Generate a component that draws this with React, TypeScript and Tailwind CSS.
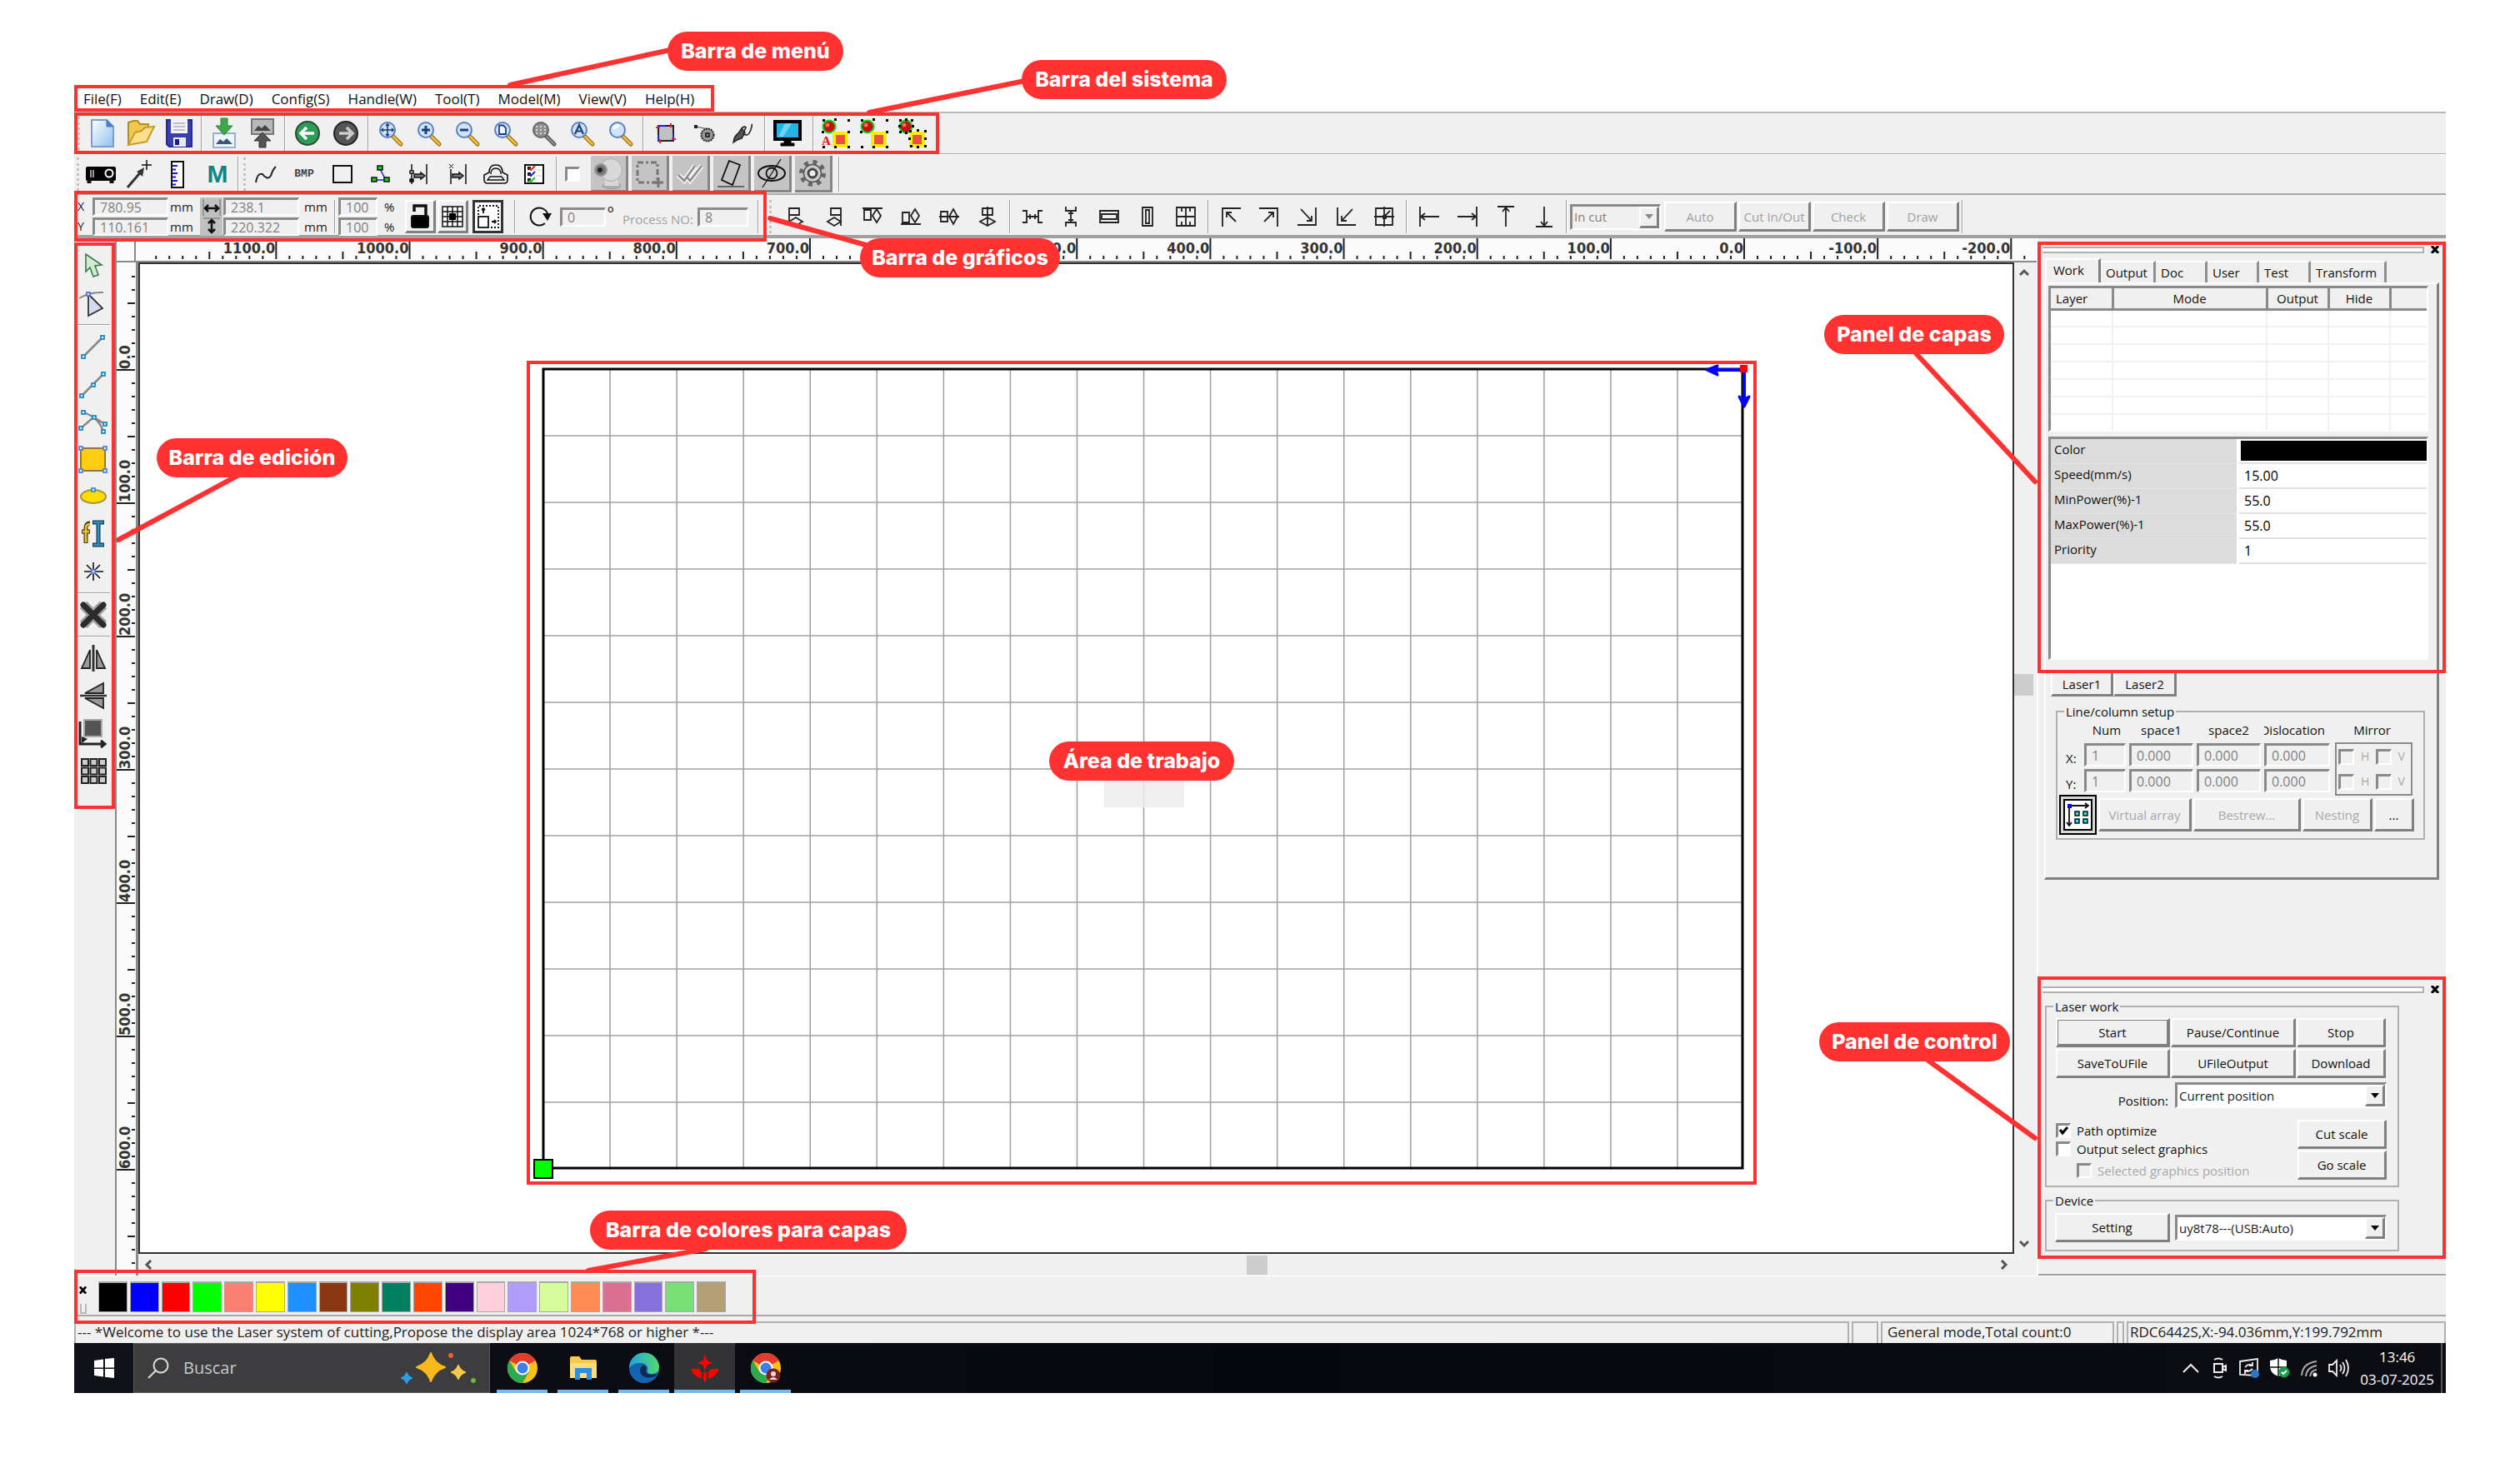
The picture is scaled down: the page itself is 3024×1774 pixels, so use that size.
import React from "react";

const UI = "font-['Open_Sans','Noto_Sans',sans-serif]";
const raised = "border-t-2 border-l-2 border-b-3 border-r-3 border-t-white border-l-white border-b-[#808080] border-r-[#808080] bg-[#f0f0f0]";
const sunken = "border-t-3 border-l-3 border-b-2 border-r-2 border-t-[#8a8a8a] border-l-[#8a8a8a] border-b-white border-r-white";

type Kids = { children?: React.ReactNode };

function Frame({ className }: { className: string }) {
  return <span aria-hidden className={`pointer-events-none absolute z-10 border-4 border-[#ff3131] ${className}`} />;
}

function Svg({ w = 32, h = 32, vb, children }: Kids & { w?: number; h?: number; vb?: string }) {
  return (
    <svg width={w} height={h} viewBox={vb ?? `0 0 ${w} ${h}`} fill="none" stroke="#111" strokeWidth="2" className="block shrink-0 overflow-visible">
      {children}
    </svg>
  );
}

function Tool({ label, children }: Kids & { label: string }) {
  return (
    <button aria-label={label} className="flex h-full w-[46px] shrink-0 items-center justify-center">
      {children}
    </button>
  );
}

function Sep() {
  return (
    <span className="flex h-full w-2 shrink-0 justify-center py-0.5">
      <span className="w-0.5 border-r border-l border-r-white border-l-[#a0a0a0]" />
    </span>
  );
}

function Grip() {
  return <span className="h-10 w-[3px] shrink-0 self-center border-l-3 border-dotted border-[#c4c4c4]" />;
}

/* ---------- system bar icons ---------- */

function Lens({ gray, children }: Kids & { gray?: boolean }) {
  return (
    <Svg w={30} h={30}>
      <path d="M17 18 L27 28" stroke={gray ? "#555" : "#9a6a10"} strokeWidth="5" strokeLinecap="round" />
      <path d="M18 19 L27 28" stroke={gray ? "#888" : "#f0c040"} strokeWidth="2.5" strokeLinecap="round" />
      <circle cx="11" cy="11" r="9" fill={gray ? "#909090" : "#cfe4fb"} stroke={gray ? "#666" : "#5b7fc0"} strokeWidth="2" />
      {!children && <path d="M5 10 A6.5 6.5 0 0 1 14 5 Q12 10 5 10Z" fill="#fff" stroke="none" />}
      {children}
    </Svg>
  );
}

function Balls({ kind }: { kind: number }) {
  const d = kind === 2 ? [[1, 1], [8, 0], [15, 1], [0, 8], [16, 8], [1, 15], [8, 16], [13, 14], [22, 13], [31, 14], [12, 23], [31, 23], [14, 32], [22, 33], [31, 32]] : [[1, 1], [15, 0], [31, 1], [0, 15], [31, 15], [1, 33], [15, 33], [31, 33]];
  return (
    <Svg w={34} h={34}>
      <circle cx="9" cy="9" r="7.5" fill="#c01010" stroke="#20d020" strokeWidth="2" />
      <circle cx="7" cy="7" r="2.5" fill="#f07050" stroke="none" />
      <rect x="15" y="17" width="15" height="15" fill="#f05040" stroke="#ffee00" strokeWidth="4" />
      {d.map(([x, y], i) => (
        <rect key={i} x={x} y={y - 1} width="3" height="3" fill="#000" stroke="none" />
      ))}
      {kind === 0 && (
        <text x="0" y="31" fontSize="15" fontWeight="700" fill="#f01010" stroke="none" className="font-['Liberation_Serif',serif]">
          A
        </text>
      )}
    </Svg>
  );
}

function SystemBar() {
  return (
    <div className="relative flex h-[51px] items-center border-t-2 border-b border-t-[#b8b8b8] border-b-[#a8a8a8] bg-[#f0f0f0] pl-1">
      <Frame className="inset-y-[-1px] left-0 w-[1038px]" />
      <Grip />
      <span className="w-1" />
      <Tool label="New">
        <Svg w={30} h={34}>
          <defs>
            <linearGradient id="pg" x1="0" y1="0" x2="1" y2="1">
              <stop offset="0" stopColor="#fff" />
              <stop offset="1" stopColor="#8fc0ee" />
            </linearGradient>
          </defs>
          <path d="M2 1 H20 L28 9 V33 H2Z" fill="url(#pg)" stroke="#7c9ccc" />
          <path d="M20 1 V9 H28Z" fill="#4a80c8" stroke="#4a78b8" strokeWidth="1" />
        </Svg>
      </Tool>
      <Tool label="Open">
        <Svg w={34} h={34}>
          <path d="M2 31 V4 L8 2 L13 2 L16 6 L26 6 V14" fill="#f2c84c" stroke="#b98a1c" />
          <path d="M2 31 L10 16 L18 14 L22 10 L33 9 L24 27Z" fill="#fde08a" stroke="#c89a2c" />
        </Svg>
      </Tool>
      <Tool label="Save">
        <Svg w={32} h={34}>
          <path d="M1 1 H31 V33 H4 L1 30Z" fill="#3a3fb0" stroke="#26289a" />
          <rect x="6" y="0" width="20" height="17" fill="#f4f4f8" stroke="none" />
          <path d="M9 5 H23 M9 9 H23 M9 13 H23" stroke="#c0c0cc" />
          <rect x="9" y="22" width="15" height="11" fill="#e8e8f4" stroke="none" />
          <rect x="11" y="24" width="5" height="7" fill="#1c1f78" stroke="none" />
        </Svg>
      </Tool>
      <Sep />
      <Tool label="Import">
        <Svg w={28} h={36}>
          <rect x="1" y="18" width="26" height="17" fill="#eef5fc" stroke="#9ab0c8" />
          <path d="M4 31 L9 25 L13 28 L17 24 L24 31Z" fill="#3a5878" stroke="none" />
          <path d="M10 0 H18 V9 H24 L14 20 L4 9 H10Z" fill="#3fa84a" stroke="#2b8436" strokeWidth="1" />
        </Svg>
      </Tool>
      <Tool label="Export">
        <Svg w={28} h={36}>
          <rect x="1" y="1" width="26" height="18" fill="#b8b8b8" stroke="#777" />
          <path d="M4 15 L9 9 L13 12 L17 8 L24 15Z" fill="#444" stroke="none" />
          <path d="M10 35 H18 V27 H24 L14 17 L4 27 H10Z" fill="#555" stroke="#333" strokeWidth="1" />
        </Svg>
      </Tool>
      <Sep />
      <Tool label="Undo">
        <Svg>
          <circle cx="16" cy="16" r="14" fill="#2f9c55" stroke="#2c4636" />
          <path d="M24 16 H9 M15 9 L8 16 L15 23" stroke="#fff" strokeWidth="3.5" />
        </Svg>
      </Tool>
      <Tool label="Redo">
        <Svg>
          <circle cx="16" cy="16" r="14" fill="#555" stroke="#222" />
          <path d="M8 16 H23 M17 9 L24 16 L17 23" stroke="#ccc" strokeWidth="3.5" />
        </Svg>
      </Tool>
      <Sep />
      <Tool label="Pan">
        <Lens><path d="M11 4 V18 M4 11 H18 M9 6 L11 4 L13 6 M9 16 L11 18 L13 16 M6 9 L4 11 L6 13 M16 9 L18 11 L16 13" stroke="#1d3f80" strokeWidth="1.6" /></Lens>
      </Tool>
      <Tool label="Zoom in">
        <Lens><path d="M11 6 V16 M6 11 H16" stroke="#1d3f80" strokeWidth="3" /></Lens>
      </Tool>
      <Tool label="Zoom out">
        <Lens><path d="M6 11 H16" stroke="#1d3f80" strokeWidth="3" /></Lens>
      </Tool>
      <Tool label="Zoom to page">
        <Lens><path d="M7 5.5 H12 L15 8.5 V16 H7Z" fill="#eef6ff" stroke="#1d3f80" strokeWidth="1.8" /></Lens>
      </Tool>
      <Tool label="Zoom to data">
        <Lens gray><path d="M5 7 H17 M5 11 H17 M5 15 H17" stroke="#eee" strokeWidth="1.6" strokeDasharray="2 3" /></Lens>
      </Tool>
      <Tool label="Zoom all">
        <Lens><path d="M6 16 L11 5 L16 16 M8 12.5 H14" stroke="#1d3f80" strokeWidth="2.2" /></Lens>
      </Tool>
      <Tool label="Zoom view">
        <Lens />
      </Tool>
      <Sep />
      <Tool label="Track frame">
        <Svg w={24} h={24}>
          <rect x="3" y="3" width="18" height="18" fill="#c0c0c0" stroke="#222" />
          <path d="M3 3 H12 M21 12 V21 M3 14 V21" stroke="#2020f0" />
          <path d="M0 5 H5 M18 0 V5 M19 19 H24 M5 19 V24" stroke="#f02020" />
        </Svg>
      </Tool>
      <Tool label="Node track">
        <Svg w={26} h={24}>
          <path d="M3 4 L18 7" strokeWidth="1.2" stroke="#555" />
          <rect x="1" y="2" width="4" height="4" fill="#222" stroke="none" />
          <circle cx="17" cy="14" r="7.5" fill="#999" stroke="#222" strokeDasharray="2 1" />
          <rect x="15" y="12" width="4" height="4" strokeWidth="1.5" />
        </Svg>
      </Tool>
      <Tool label="Pen track">
        <Svg w={26} h={24}>
          <path d="M2 23 Q3 15 8 12 L12 6 L16 11 L12 18 Q7 19 2 23Z" fill="#555" stroke="#222" strokeWidth="1.5" />
          <path d="M12 6 Q16 3 17 5 L14 12 Q19 17 22 10 T24 1" stroke="#333" strokeWidth="1.8" />
        </Svg>
      </Tool>
      <Sep />
      <Tool label="Preview">
        <Svg w={34} h={32}>
          <rect x="2" y="2" width="30" height="21" fill="#22b4e4" stroke="#000" strokeWidth="4" />
          <path d="M6 20 L14 4 H22 L12 20Z" fill="#6ad4f4" stroke="none" />
          <path d="M13 24 H21 V28 H25 V31 H9 V28 H13Z" fill="#000" stroke="#000" strokeWidth="1" />
        </Svg>
      </Tool>
      <span className="w-1" />
      <Sep />
      <Tool label="Sort all"><Balls kind={0} /></Tool>
      <Tool label="Sort"><Balls kind={1} /></Tool>
      <Tool label="Sort nodes"><Balls kind={2} /></Tool>
    </div>
  );
}

/* ---------- tool bar ---------- */

function Pad({ label, children }: Kids & { label: string }) {
  return (
    <button aria-label={label} className="flex h-[44px] w-[45px] items-center justify-center border-r-3 border-b-3 border-[#858585] bg-[#c4c4c4]">
      {children}
    </button>
  );
}

function ToolBar() {
  return (
    <div className="relative flex h-[49px] items-center border-t border-b-2 border-t-white border-b-[#a8a8a8] bg-[#f0f0f0] pl-[3px]">
      <Grip />
      <span className="w-[3px]" />
      <Tool label="Laser device">
        <Svg w={36} h={24}>
          <rect x="0" y="3" width="36" height="17" rx="2" fill="#000" stroke="none" />
          <path d="M4 18 V23 M31 18 V23" strokeWidth="5" />
          <path d="M6 7 V16 M9 7 V16" stroke="#999" />
          <circle cx="28" cy="11" r="4.5" stroke="#fff" fill="#000" />
        </Svg>
      </Tool>
      <Tool label="Set position">
        <Svg w={32} h={34}>
          <path d="M2 33 L20 12" stroke="#333" strokeWidth="3" />
          <path d="M22 9 L13 14 L20 20Z" fill="#333" stroke="none" />
          <path d="M25 0 V12 M19 6 H31" strokeWidth="1.5" />
        </Svg>
      </Tool>
      <Tool label="Measure">
        <Svg w={16} h={33}>
          <rect x="1" y="1" width="14" height="31" fill="#fff" />
          <path d="M2 6 H8 M2 10.5 H6 M2 15 H8 M2 19.5 H6 M2 24 H8 M2 28.5 H6" stroke="#1818e8" />
        </Svg>
      </Tool>
      <Tool label="Material">
        <span className="pl-1 font-['Liberation_Sans',sans-serif] text-[30px] leading-8 font-bold text-[#0e8484]">M</span>
      </Tool>
      <Sep />
      <span className="w-0.5" />
      <Grip />
      <span className="w-px" />
      <Tool label="Smooth curve">
        <Svg w={26} h={22}><path d="M1 21 Q3 9 9 11 Q15 19 19 13 Q21 6 25 2" stroke="#222" /></Svg>
      </Tool>
      <Tool label="Bitmap">
        <span className="font-['Liberation_Mono',monospace] text-[13px] font-bold text-[#444]">BMP</span>
      </Tool>
      <Tool label="Close curve">
        <Svg w={24} h={22}><rect x="1" y="1" width="22" height="20" /></Svg>
      </Tool>
      <Tool label="Data check">
        <Svg w={24} h={22}>
          <path d="M11 5 L18 18 H4" stroke="#2020f0" strokeWidth="1.5" />
          <rect x="8" y="1" width="6" height="5" fill="#0d0" strokeWidth="1.5" />
          <rect x="1" y="15" width="6" height="5" fill="#0d0" strokeWidth="1.5" />
          <rect x="16" y="15" width="6" height="5" fill="#0d0" strokeWidth="1.5" />
        </Svg>
      </Tool>
      <Tool label="Offset">
        <Svg w={24} h={24}>
          <path d="M3 0 V24 M21 0 V24" strokeWidth="1.5" />
          <rect x="1" y="8" width="4" height="3" fill="#fff" strokeWidth="1.500" />
          <rect x="1" y="18" width="4" height="3" fill="#111" strokeWidth="1.500" />
          <path d="M6 12 H14 V10 L19 14 L14 18 V16 H6Z" fill="#777" strokeWidth="1.5" />
        </Svg>
      </Tool>
      <Tool label="Gap">
        <Svg w={22} h={24}>
          <path d="M3 6 V24 M21 0 V24" strokeWidth="1.5" />
          <path d="M1 0 L6 5 M6 0 L1 5" strokeWidth="1" />
          <path d="M5 12 H13 V10 L18 14 L13 18 V16 H5Z" fill="#777" strokeWidth="1.5" />
        </Svg>
      </Tool>
      <Tool label="Group">
        <Svg w={32} h={24}>
          <path d="M8 10 Q8 1 16 1 T24 10 L30 13 V19 Q30 23 26 23 H6 Q2 23 2 19 V13Z" strokeWidth="1.6" />
          <path d="M10 12 Q10 5 16 5 T22 12 M6 19 H26 L23 15 H9Z" strokeWidth="1.3" />
        </Svg>
      </Tool>
      <Tool label="Options list">
        <Svg w={24} h={24}>
          <rect x="1" y="1" width="22" height="22" fill="#fff" />
          <path d="M4 5 H8 M4 12 H8 M4 19 H8" strokeWidth="4" />
          <path d="M6 5 L8 7 L13 2" stroke="#e02020" />
          <path d="M6 12 L8 14 L13 9" stroke="#2020e0" />
          <path d="M6 19 L8 21 L13 16" stroke="#20c020" />
          <path d="M14 7 H21 M14 14 H21" stroke="#ccc" strokeWidth="1" />
        </Svg>
      </Tool>
      <Sep />
      <input type="checkbox" aria-label="Camera" className={`mx-1.5 size-[18px] shrink-0 appearance-none bg-white ${sunken}`} />
      <div className="ml-[7px] flex gap-1">
        <Pad label="Webcam">
          <Svg w={34} h={38}>
            <ellipse cx="21" cy="34" rx="11" ry="3.500" fill="#b0b0b0" stroke="#999" strokeWidth="1" />
            <path d="M13 26 H28 L30 34 H12Z" fill="#d8d8d8" stroke="none" />
            <circle cx="20" cy="15" r="13.500" fill="#d8d8d8" stroke="#aaa" strokeWidth="1" />
            <circle cx="8" cy="15" r="7" fill="#777" stroke="#999" />
            <circle cx="7" cy="15" r="3" fill="#222" stroke="none" />
          </Svg>
        </Pad>
        <Pad label="Select area">
          <Svg w={34} h={34}>
            <rect x="3" y="4" width="24" height="24" stroke="#777" strokeWidth="3" strokeDasharray="7 3 3 3" />
            <path d="M28 22 V34 M22 28 H34" stroke="#777" strokeWidth="3" />
          </Svg>
        </Pad>
        <Pad label="Confirm">
          <Svg w={32} h={24}>
            <path d="M2 14 L9 21 L22 3 M12 16 L16 21 L30 3" stroke="#f4f4f4" strokeWidth="6" />
            <path d="M2 14 L9 21 L22 3 M12 16 L16 21 L30 3" stroke="#8c8c8c" strokeWidth="2.500" />
          </Svg>
        </Pad>
        <Pad label="Rotate frame">
          <Svg w={32} h={34}>
            <path d="M14 2 L27 7 L18 31 L5 25Z" strokeWidth="1.8" />
            <path d="M0 33 H32" stroke="#666" />
          </Svg>
        </Pad>
        <Pad label="Show or hide">
          <Svg w={36} h={34}>
            <ellipse cx="18" cy="17" rx="16" ry="9" strokeWidth="2" />
            <circle cx="18" cy="17" r="6.500" strokeWidth="1.8" />
            <path d="M29 0 L7 34" strokeWidth="1.3" />
          </Svg>
        </Pad>
        <Pad label="Settings">
          <Svg w={34} h={34}>
            <circle cx="17" cy="17" r="13.500" stroke="#666" strokeWidth="5" strokeDasharray="5 5.600" />
            <circle cx="17" cy="17" r="10.500" fill="#ccc" stroke="#555" strokeWidth="1.500" />
            <circle cx="17" cy="17" r="5" fill="#eee" stroke="#444" strokeWidth="3" />
          </Svg>
        </Pad>
      </div>
      <span className="w-1" />
      <Sep />
    </div>
  );
}

/* ---------- graphics bar ---------- */

function Num({ id, label, value, className }: { id?: string; label?: string; value: string; className: string }) {
  return (
    <input
      id={id}
      aria-label={label}
      defaultValue={value}
      className={`block min-w-0 bg-[#f0f0f0] px-1.5 text-[16px] leading-4 text-[#808080] outline-none ${sunken} ${className}`}
    />
  );
}

function Square({ label, children }: Kids & { label: string }) {
  return (
    <button aria-label={label} className={`flex h-10 w-[37px] items-center justify-center ${raised}`}>
      {children}
    </button>
  );
}

const alignIcons: [string, string][][] = [
  [
    ["Align left", "M4 1 V23 M4 2 H16 V10 H4 M4 18 L12 13 L20 18 L12 23Z"],
    ["Align right", "M20 1 V23 M20 2 H8 V10 H20 M20 18 L12 13 L4 18 L12 23Z"],
    ["Align top", "M0 2 H24 M2 4 H10 V16 H2Z M17 3 L22 11 L17 19 L12 11Z"],
    ["Align bottom", "M0 21 H24 M2 7 H10 V19 H2Z M17 3 L22 11 L17 19 L12 11Z"],
    ["Center horizontally", "M0 12 H24 M2 6 H10 V18 H2Z M17 3 L22 12 L17 21 L12 12Z"],
    ["Center vertically", "M12 0 V24 M6 2 H18 V10 H6Z M12 13 L21 18 L12 23 L3 18Z"],
  ],
  [
    ["Space horizontally", "M0 5 H5 V19 H0 M24 5 H19 V19 H24 M6 12 H18 M9 9 V15 M15 9 V15"],
    ["Space vertically", "M6 0 V5 H18 V0 M6 24 V19 H18 V24 M12 5 V19 M9 8 H15 M9 16 H15"],
    ["Same width", "M1 5 H23 V19 H1Z M3 9 H21 V15 H3Z"],
    ["Same height", "M6 1 H18 V23 H6Z M10 4 H14 V20 H10Z"],
    ["Same size", "M1 1 H23 V23 H1Z M12 2 V22 M2 12 H22 M7 2 V6 M17 2 V6 M7 18 V22 M17 18 V22"],
  ],
  [
    ["To top left", "M2 24 V2 H24 M18 18 L7 7 M7 13 V7 H13"],
    ["To top right", "M22 24 V2 H0 M6 18 L17 7 M17 13 V7 H11"],
    ["To bottom right", "M22 1 V22 H0 M4 3 L17 17 M17 11 V17 H11"],
    ["To bottom left", "M2 1 V22 H24 M20 3 L7 17 M7 11 V17 H13"],
    ["To center", "M2 2 H22 V22 H2Z M12 0 V24 M0 12 H24 M12 12 L19 5 M11 11 H14 V14 H11Z"],
  ],
  [
    ["To left", "M1 0 V24 M2 12 H24 M7 8 L2 12 L7 16"],
    ["To right", "M23 0 V24 M0 12 H22 M17 8 L22 12 L17 16"],
    ["To top", "M2 0 H22 M12 1 V24 M8 6 L12 1 L16 6"],
    ["To bottom", "M2 24 H22 M12 0 V23 M8 18 L12 23 L16 18"],
  ],
];

function GraphicsBar() {
  return (
    <div className={`relative flex h-[52px] items-center border-b-4 border-b-[#a0a0a0] bg-[#f0f0f0] pt-1 text-[15px] text-[#222] ${UI}`}>
      <Frame className="top-[-5px] bottom-[-8px] left-0 w-[831px]" />
      <div className="grid grid-cols-[18px_91px_38px] grid-rows-2 items-center gap-y-0.5 pl-1 leading-5">
        <label htmlFor="px" className="text-[14px]">X</label>
        <Num id="px" value="780.95" className="h-[22px]" />
        <span className="pl-0.5">mm</span>
        <label htmlFor="py" className="text-[14px]">Y</label>
        <Num id="py" value="110.161" className="h-[22px]" />
        <span className="pl-0.5">mm</span>
      </div>
      <span className="flex h-[46px] w-[27px] flex-col items-center justify-between bg-[#c0c0c0] py-0.5">
        <Svg w={22} h={20}>
          <path d="M1 0 V20 M21 0 V20" stroke="#888" strokeWidth="1.500" />
          <path d="M3 11 H19 M7 7 L3 11 L7 15 M15 7 L19 11 L15 15" strokeWidth="2.500" />
        </Svg>
        <Svg w={22} h={20}>
          <path d="M1 1 H21" stroke="#888" strokeWidth="1.500" />
          <path d="M11 3 V18 M7 7 L11 3 L15 7 M7 14 L11 18 L15 14" strokeWidth="2.500" />
        </Svg>
      </span>
      <div className="grid grid-cols-[91px_39px] grid-rows-2 items-center gap-y-0.5 pl-px leading-5">
        <Num label="Width" value="238.1" className="h-[22px]" />
        <span className="pl-1.5">mm</span>
        <Num label="Height" value="220.322" className="h-[22px]" />
        <span className="pl-1.5">mm</span>
      </div>
      <Sep />
      <div className="grid grid-cols-[47px_33px] grid-rows-2 items-center gap-y-0.5 leading-5">
        <Num label="Width percent" value="100" className="h-[22px]" />
        <span className="pl-2">%</span>
        <Num label="Height percent" value="100" className="h-[22px]" />
        <span className="pl-2">%</span>
      </div>
      <Square label="Lock ratio">
        <Svg w={24} h={30}>
          <path d="M5 9 V2 H19 V14" strokeWidth="3.500" />
          <rect x="2" y="14" width="20" height="14" rx="2" fill="#000" />
        </Svg>
      </Square>
      <span className="w-0.5" />
      <Square label="Anchor">
        <Svg w={26} h={26}>
          <rect x="1" y="1" width="24" height="24" fill="#fff" strokeWidth="1.500" />
          <path d="M7 1 V25 M13 1 V25 M19 1 V25 M1 7 H25 M1 13 H25 M1 19 H25" strokeWidth="1.500" />
          <rect x="9" y="9" width="8" height="8" fill="#000" stroke="none" />
        </Svg>
      </Square>
      <button aria-label="Resize" className="ml-[5px] flex h-10 w-[37px] items-center justify-center border-3 border-[#333] bg-white">
        <Svg w={26} h={28}>
          <path d="M1 12 V1 H25 V27 H14" strokeWidth="1.800" strokeDasharray="2 2" />
          <rect x="1" y="14" width="12" height="13" strokeWidth="1.800" />
          <path d="M7 10 V4 M5 6 L7 4 L9 6 M17 20 H22 M20 18 L22 20 L20 22" strokeWidth="1.800" />
        </Svg>
      </button>
      <span className="w-2.5" />
      <Sep />
      <span className="w-3" />
      <Svg w={28} h={26}>
        <path d="M20 5 A10.500 10.500 0 1 0 20 21" strokeWidth="2" />
        <path d="M17 9 H28 L23 18Z" fill="#111" stroke="none" />
        <path d="M20 5 Q23 7 23 11" />
      </Svg>
      <Num label="Angle" value="0" className="ml-2.5 h-[23px] w-[55px]" />
      <span className="mb-2 w-[20px] pl-0.5 text-[20px]">º</span>
      <label htmlFor="process" className="mt-1.5 w-[90px] text-[#a0a0a0]">Process NO:</label>
      <Num id="process" value="8" className="h-[23px] w-[61px]" />
      <span className="w-2" />
      <Sep />
      <span className="w-[9px]" />
      <Grip />
      <span className="w-1.5" />
      {alignIcons.map((group, i) => (
        <React.Fragment key={i}>
          {group.map(([label, d]) => (
            <Tool key={label} label={label}>
              <svg width="24" height="24" viewBox="0 0 24 24" fill="none" stroke="#222" strokeWidth="1.800" className="overflow-visible">
                <path d={d} />
              </svg>
            </Tool>
          ))}
          <Sep />
        </React.Fragment>
      ))}
      <Select label="Cut mode" value="In cut" className="h-[31px] w-[109px]" muted />
      <div className="ml-1 flex gap-0.5">
        {["Auto", "Cut In/Out", "Check", "Draw"].map((t) => (
          <button key={t} className={`h-9 w-[87px] text-[15px] leading-4 whitespace-nowrap text-[#a0a0a0] ${raised}`}>
            {t}
          </button>
        ))}
      </div>
      <Sep />
    </div>
  );
}

function Select({ id, label, value, className, muted }: { id?: string; label?: string; value: string; className: string; muted?: boolean }) {
  return (
    <span className={`relative block ${muted ? "bg-[#f0f0f0] text-[#808080]" : "bg-white text-[#1a1a1a]"} ${sunken} ${className}`}>
      <select id={id} aria-label={label} className="size-full appearance-none bg-transparent pl-0.5 text-[15px] outline-none">
        <option>{value}</option>
      </select>
      <span className={`pointer-events-none absolute inset-y-0 right-0 flex w-6 items-center justify-center ${raised}`}>
        <svg width="10" height="6" viewBox="0 0 10 6" fill={muted ? "#8a8a8a" : "#000"}>
          <path d="M0 0 H10 L5 6Z" />
        </svg>
      </span>
    </span>
  );
}

/* ---------- editing bar ---------- */

function Node({ x, y, c = "#1a8cc8" }: { x: number; y: number; c?: string }) {
  return <rect x={x - 2} y={y - 2} width="4" height="4" fill="#e4f4ff" stroke={c} strokeWidth="1.800" />;
}

const editTools: ([string, React.ReactNode] | null)[] = [
  ["Pick", <path key="p" d="M7 2 V23 L12 18 L16 29 L22 27 L18 16 L26 15Z" fill="#d2ecd2" stroke="#3a7a4a" strokeWidth="1.600" />],
  [
    "Edit node",
    <g key="p">
      <path d="M-1 10 Q12 2 28 3" stroke="#888" />
      <path d="M10 5 V31 L27 22Z" fill="#d4d8f0" stroke="#333" strokeWidth="1.800" />
      <Node x={10} y={5} c="#5a70e0" />
    </g>,
  ],
  null,
  ["Line", <g key="p"><path d="M5 27 L26 6" stroke="#888" strokeWidth="2.500" /><Node x={4} y={28} /><Node x={27} y={5} /></g>],
  ["Polyline", <g key="p"><path d="M3 29 L28 4" stroke="#888" strokeWidth="2.500" /><Node x={2} y={30} /><Node x={16} y={17} /><Node x={28} y={4} /></g>],
  [
    "Bezier",
    <g key="p">
      <path d="M1 24 L16 11 M5 5 L17 11 L30 19 M16 11 Q24 16 28 28" stroke="#888" strokeWidth="2.500" />
      <Node x={1} y={24} /><Node x={4} y={5} /><Node x={17} y={11} /><Node x={30} y={19} /><Node x={28} y={28} />
    </g>,
  ],
  [
    "Rectangle",
    <g key="p">
      <rect x="1" y="3" width="29" height="27" fill="#ffce10" stroke="#8a7a40" />
      <Node x={1} y={3} c="#5a80d8" /><Node x={30} y={3} c="#5a80d8" /><Node x={1} y={30} c="#5a80d8" /><Node x={30} y={30} c="#5a80d8" />
    </g>,
  ],
  ["Ellipse", <g key="p"><ellipse cx="16" cy="16" rx="15" ry="8" fill="#ffdc00" stroke="#a89040" /><Node x={16} y={8} c="#3a90d8" /></g>],
  [
    "Text",
    <g key="p">
      <path d="M12 3 Q7 3 7 9 V27 M2 13 H12" stroke="#4a3c10" strokeWidth="5" />
      <path d="M12 4 Q7 4 7 9 V26 M3 13 H11" stroke="#f2c22c" strokeWidth="2.500" />
      <path d="M15 2 H29 M22 2 V29 M15 29 H29" stroke="#1a3a50" strokeWidth="5" />
      <path d="M16 2 H28 M22 2 V29 M16 29 H28" stroke="#2c90c4" strokeWidth="2.500" />
    </g>,
  ],
  ["Point", <g key="p"><path d="M16 5 V27 M5 16 H28 M8 8 L24 24 M24 8 L8 24" strokeWidth="1.600" /><Node x={16} y={16} c="#5a80e8" /></g>],
  null,
  ["Delete", <g key="p"><path d="M4 4 L28 28 M28 4 L4 28" stroke="#a0a0a0" strokeWidth="12" /><path d="M4 4 L28 28 M28 4 L4 28" stroke="#2c2c2c" strokeWidth="7" strokeLinecap="round" /></g>],
  null,
  ["Mirror horizontally", <g key="p"><path d="M12 6 V28 H2Z M20 6 V28 H30Z" fill="#999" stroke="#222" strokeWidth="1.800" /><path d="M16 0 V32" stroke="#333" strokeWidth="3" /></g>],
  ["Mirror vertically", <g key="p"><path d="M28 1 V13 H6Z M28 31 V19 H6Z" fill="#999" stroke="#222" strokeWidth="1.800" /><path d="M0 16 H32" stroke="#333" strokeWidth="2.500" /></g>],
  ["Set origin", <g key="p"><rect x="5" y="0" width="21" height="20" fill="#555" stroke="#aaa" /><path d="M0 2 V29 H30 M25 25 L30 29 L25 33" stroke="#222" strokeWidth="3" /><path d="M2 28 V20 L9 23Z" fill="#222" stroke="none" /></g>],
  [
    "Array",
    <g key="p">
      {[2, 12.5, 23].map((y) =>
        [2, 12.5, 23].map((x) => <rect key={`${x}-${y}`} x={x} y={y} width="8" height="8" fill="#ccc" stroke="#222" />),
      )}
    </g>,
  ],
];

function EditBar() {
  return (
    <aside className="relative w-[49px] shrink-0 bg-[#f0f0f0] pt-2.5 pr-1">
      <Frame className="top-[5px] left-0 h-[680px] w-[49px]" />
      <div className="flex flex-col items-center">
        {editTools.map((t, i) =>
          t ? (
            <button key={i} aria-label={t[0]} className="flex h-[45px] w-full items-center justify-center">
              <Svg>{t[1]}</Svg>
            </button>
          ) : (
            <span key={i} className="flex h-[7px] w-10 items-center">
              <span className="h-0.5 w-full border-t border-b border-t-[#a0a0a0] border-b-white" />
            </span>
          ),
        )}
      </div>
    </aside>
  );
}

/* ---------- rulers and canvas ---------- */

const range = (from: number, to: number) => Array.from({ length: to - from + 1 }, (_, i) => from + i);
const rulerText = "fill-[#333] text-[18px] font-bold font-['DejaVu_Sans_Condensed','DejaVu_Sans',sans-serif]";

function HorizontalRuler() {
  return (
    <div className="relative h-[29px] flex-1 overflow-hidden border-b-2 border-[#8a8a8a] bg-[#fafafa]">
      <svg className="absolute inset-0 size-full">
        {range(-21, 119).map((n) => {
          const x = 1930 - n * 16.015;
          const top = n % 10 === 0 ? 0 : n % 5 === 0 ? 16 : 21;
          return <path key={n} d={`M${x} ${top} V25`} stroke="#222" strokeWidth="2" />;
        })}
        {range(-2, 11).map((n) => (
          <text key={n} x={1929 - n * 160.15} y="18" textAnchor="end" className={rulerText}>
            {(n * 100).toFixed(1)}
          </text>
        ))}
      </svg>
    </div>
  );
}

function VerticalRuler() {
  return (
    <div className="relative w-7 shrink-0 overflow-hidden border-r-3 border-l-2 border-[#8a8a8a] bg-[#fafafa]">
      <svg className="absolute inset-0 size-full">
        {range(-7, 67).map((n) => {
          const y = 129 + n * 16;
          const left = n % 10 === 0 ? 0 : n % 5 === 0 ? 13 : 18;
          return <path key={n} d={`M${left} ${y} H22`} stroke="#222" strokeWidth="2" />;
        })}
        {range(0, 6).map((n) => (
          <text key={n} x="0" y="0" transform={`translate(16 ${128 + n * 160}) rotate(-90)`} className={rulerText}>
            {(n * 100).toFixed(1)}
          </text>
        ))}
      </svg>
    </div>
  );
}

function Chevron({ d }: { d: string }) {
  return (
    <svg width="12" height="12" viewBox="0 0 12 12" fill="none" stroke="#555" strokeWidth="3">
      <path d={d} />
    </svg>
  );
}

function Workspace() {
  return (
    <div className="relative flex-1 overflow-hidden border-2 border-[#333] bg-white">
      <svg width="1441" height="960" className="absolute top-[126px] left-[484px] overflow-visible">
        <g stroke="#a0a0a0" strokeWidth="1.5">
          {range(1, 17).map((n) => (
            <path key={`v${n}`} d={`M${n * 80.06} 0 V961`} />
          ))}
          {range(1, 11).map((n) => (
            <path key={`h${n}`} d={`M0 ${n * 80} H1439`} />
          ))}
        </g>
        <rect x="673" y="448" width="96" height="78" fill="#ececec" opacity="0.85" />
        <rect x="0" y="0" width="1439" height="959" fill="none" stroke="#000" strokeWidth="3" />
        <rect x="-11" y="949" width="22" height="22" fill="#00ff00" stroke="#000" strokeWidth="2" />
        <g stroke="#0000ff" strokeWidth="4" fill="#0000ff">
          <path d="M1436 1 H1404 M1441 4 V38" />
          <path d="M1396 1 L1409 -4 L1407 1 L1409 7Z M1441 45 L1435 33 L1441 36 L1447 33Z" strokeWidth="3" strokeLinejoin="round" />
        </g>
        <rect x="1436" y="-5" width="9" height="9" fill="#ff0000" />
      </svg>
      <Frame className="top-[116px] left-[464px] h-[989px] w-[1476px]" />
    </div>
  );
}

function Center() {
  return (
    <div className="flex min-w-0 flex-1 flex-col bg-[#f0f0f0]">
      <div className="flex">
        <span className="w-[25px] border-r-2 border-b-2 border-l-2 border-[#8a8a8a] bg-[#fafafa]" />
        <HorizontalRuler />
      </div>
      <div className="flex flex-1">
        <VerticalRuler />
        <div className="flex min-w-0 flex-1 flex-col">
          <div className="flex flex-1">
            <Workspace />
            <div className="flex w-[27px] flex-col items-center py-1.5 pr-1">
              <Chevron d="M1 9 L6 4 L11 9" />
              <span className="grow-[422]" />
              <span className="h-[26px] w-[23px] bg-[#cdcdcd]" />
              <span className="grow-[578]" />
              <Chevron d="M1 3 L6 8 L11 3" />
            </div>
          </div>
          <div className="flex h-[26px] items-center pr-[33px] pl-1.5">
            <Chevron d="M9 1 L4 6 L9 11" />
            <span className="grow-[599]" />
            <span className="h-[23px] w-[25px] bg-[#cdcdcd]" />
            <span className="grow-[401]" />
            <Chevron d="M3 1 L8 6 L3 11" />
          </div>
        </div>
      </div>
    </div>
  );
}

/* ---------- right panels ---------- */

function PanelGrip() {
  return (
    <div className="flex items-center gap-[3px] pl-[5px]">
      <span className="h-2 flex-1 border-y-2 border-r-2 border-[#b0b0b0] bg-white" />
      <button aria-label="Close" className="mr-[3px] flex w-5 justify-center">
        <svg width="10" height="9" viewBox="0 0 10 9" fill="none" stroke="#000" strokeWidth="3">
          <path d="M1 0 L9 9 M9 0 L1 9" />
        </svg>
      </button>
    </div>
  );
}

function Push({ className, children }: Kids & { className: string }) {
  return <button className={`text-[15px] leading-5 whitespace-nowrap ${raised} ${className}`}>{children}</button>;
}

function Check({ id, label, on, off }: { id: string; label: string; on?: boolean; off?: boolean }) {
  return (
    <span className="flex h-[22px] items-center gap-[7px]">
      <span className="relative flex size-[18px]">
        <input id={id} type="checkbox" defaultChecked={on} disabled={off} className={`size-[18px] appearance-none ${off ? "bg-[#f0f0f0]" : "bg-white"} ${sunken}`} />
        {on && (
          <svg className="pointer-events-none absolute inset-0" width="18" height="18" viewBox="0 0 18 18" fill="none" stroke="#000" strokeWidth="3">
            <path d="M5 8 L8 12 L14 5" />
          </svg>
        )}
      </span>
      <label htmlFor={id} className={off ? "text-[#a8a8a8]" : ""}>{label}</label>
    </span>
  );
}

const tabs: [string, string][] = [
  ["Output", "w-[66px]"],
  ["Doc", "w-[62px]"],
  ["User", "w-[62px]"],
  ["Test", "w-[62px]"],
  ["Transform", "w-[91px]"],
];
const props: [string, string][] = [
  ["Color", ""],
  ["Speed(mm/s)", "15.00"],
  ["MinPower(%)-1", "55.0"],
  ["MaxPower(%)-1", "55.0"],
  ["Priority", "1"],
];

function LayerPanel() {
  return (
    <section className="relative pt-[9px]">
      <Frame className="top-1 -left-px h-[518px] w-[490px]" />
      <PanelGrip />
      <div className="mt-1.5 ml-2 flex items-end">
        <button className="h-[29px] w-[67px] border-t-2 border-r-3 border-l-2 border-t-white border-r-[#808080] border-l-white pb-1 pl-2 text-left leading-5">Work</button>
        {tabs.map(([t, w]) => (
          <button key={t} className={`h-[26px] border-t-2 border-r-3 border-t-white border-r-[#909090] pl-1.5 text-left leading-5 ${w}`}>
            {t}
          </button>
        ))}
      </div>
      <div className="mr-[8px] ml-[7px] h-[717px] border-t-2 border-r-3 border-b-3 border-l-2 border-t-white border-r-[#808080] border-b-[#808080] border-l-white">
        <div className={`mt-0.5 mr-2.5 ml-[3px] h-[175px] overflow-hidden bg-white ${sunken}`}>
          <table className="w-full table-fixed border-collapse">
            <colgroup>
              <col className="w-[74px]" />
              <col className="w-[185px]" />
              <col className="w-[74px]" />
              <col className="w-[74px]" />
              <col />
            </colgroup>
            <thead>
              <tr className="h-[25px] bg-[#f0f0f0] leading-5">
                {["Layer", "Mode", "Output", "Hide", ""].map((h, i) => (
                  <th key={i} className={`border-r-3 border-b-3 border-[#8a8a8a] p-0 font-normal last:border-r-0 ${i === 0 ? "pl-1.5 text-left" : ""}`}>
                    {h}
                  </th>
                ))}
              </tr>
            </thead>
            <tbody>
              {range(1, 7).map((r) => (
                <tr key={r} className="h-[21px]">
                  {range(1, 5).map((c) => (
                    <td key={c} className="border-r-2 border-b-2 border-[#f0f0f0] p-0 last:border-r-0" />
                  ))}
                </tr>
              ))}
            </tbody>
          </table>
        </div>
        <div className={`mt-1.5 mr-2.5 ml-[3px] h-[268px] bg-white ${sunken}`}>
          {props.map(([k, v]) => (
            <div key={k} className="flex h-[30px] leading-6">
              <span className="w-[223px] border-b border-[#e4e4e4] bg-[#dcdcdc] pl-1">{k}</span>
              <span className="ml-[3px] flex-1 border-b-2 border-[#e0e0e0] pt-0.5 pl-1.5 text-[16px] text-black">
                {v || <span className="-ml-1 block h-6 bg-black" />}
              </span>
            </div>
          ))}
        </div>
        <div className="mt-[14px] ml-1.5 flex">
          <Push className="h-[30px] w-[75px]">Laser1</Push>
          <Push className="h-[30px] w-[76px]">Laser2</Push>
        </div>
        <ArraySetup />
      </div>
    </section>
  );
}

function Group({ title, className, children }: Kids & { title: string; className: string }) {
  return (
    <fieldset className={`relative border-2 border-[#b0b0b0] ${className}`}>
      <legend className="ml-2 h-5 px-0.5 leading-5">{title}</legend>
      {children}
    </fieldset>
  );
}

function ArraySetup() {
  const cols = "grid grid-cols-[28px_50px_77px_77px_79px] gap-x-1";
  return (
    <Group title="Line/column setup" className="mt-2 ml-3 h-[164px] w-[443px]">
      <div className={`${cols} -mt-[3px] h-[30px] items-center text-center`}>
        <span />
        <span className="pl-1">Num</span>
        <span>space1</span>
        <span>space2</span>
        <span className="flex justify-end overflow-hidden pr-1.5">Dislocation</span>
        <span className="absolute right-[39px]">Mirror</span>
      </div>
      <div className="flex gap-1.5">
        <div className="flex flex-col gap-[3px]">
          {["X", "Y"].map((a) => (
            <div key={a} className={`${cols} h-7 items-center`}>
              <span className="pt-2 pl-2.5">{a}:</span>
              <Num label={`${a} number`} value="1" className="h-7" />
              <Num label={`${a} space 1`} value="0.000" className="h-7" />
              <Num label={`${a} space 2`} value="0.000" className="h-7" />
              <Num label={`${a} dislocation`} value="0.000" className="h-7" />
            </div>
          ))}
        </div>
        <div className="flex h-16 w-[93px] flex-col justify-around border-2 border-[#8a8a8a] px-0.5">
          {["X", "Y"].map((a) => (
            <div key={a} className="flex gap-1">
              {["H", "V"].map((m) => (
                <span key={m} className="flex flex-1 items-center gap-2">
                  <input id={`${a}${m}`} type="checkbox" disabled className={`size-[19px] shrink-0 appearance-none bg-[#f0f0f0] ${sunken}`} />
                  <label htmlFor={`${a}${m}`} className="text-[14px] leading-5 text-[#a8a8a8]">{m}</label>
                </span>
              ))}
            </div>
          ))}
        </div>
      </div>
      <div className="-mt-px ml-0.5 flex items-center gap-0.5">
        <button aria-label="Array direction" className="flex h-[48px] w-[45px] shrink-0 items-center justify-center border-2 border-black bg-[#d8d8d8]">
          <span className="flex h-[38px] w-[35px] items-center justify-center border-2 border-black bg-white">
            <Svg w={28} h={30}>
              <path d="M3 4 V28 M3 4 H26 M22 1 L26 4 L22 7 M0 24 L3 28 L6 24" strokeWidth="1.800" />
              <rect x="1" y="2" width="5" height="5" fill="#00f" stroke="none" />
              {[10, 20].map((x) => [11, 20].map((y) => <rect key={`${x}${y}`} x={x} y={y} width="5" height="5" fill="#0ee" strokeWidth="1.500" />))}
            </Svg>
          </span>
        </button>
        <Push className="h-10 w-[112px] text-[#a8a8a8]">Virtual array</Push>
        <Push className="h-10 w-[129px] text-[#a8a8a8]">Bestrew...</Push>
        <Push className="h-10 w-[84px] text-[#a8a8a8]">Nesting</Push>
        <Push className="h-10 w-[48px]">...</Push>
      </div>
    </Group>
  );
}

function ControlPanel() {
  return (
    <section className="relative h-[359px] border-b-2 border-[#a0a0a0] pt-[11px]">
      <Frame className="top-0 -left-px h-[339px] w-[490px]" />
      <PanelGrip />
      <Group title="Laser work" className="mt-1.5 ml-2 h-[227px] w-[425px]">
        <div className="ml-[11px] grid grid-cols-[137px_150px_107px] gap-x-px gap-y-0.5 pt-1">
          <Push className="h-[35px] shadow-[inset_0_0_0_1px_#808080]">Start</Push>
          <Push className="h-[35px]">Pause/Continue</Push>
          <Push className="h-[35px]">Stop</Push>
          <Push className="h-[35px]">SaveToUFile</Push>
          <Push className="h-[35px]">UFileOutput</Push>
          <Push className="h-[35px]">Download</Push>
        </div>
        <div className="mt-[5px] mr-[13px] flex justify-end gap-2">
          <label htmlFor="position" className="pt-3 leading-5">Position:</label>
          <Select id="position" value="Current position" className="h-[31px] w-[254px]" />
        </div>
        <div className="mt-[13px] mr-[13px] ml-[11px] flex justify-between">
          <div className="flex flex-col pt-0.5">
            <Check id="path" label="Path optimize" on />
            <Check id="out" label="Output select graphics" />
            <span className="mt-1 ml-[25px]">
              <Check id="sel" label="Selected graphics position" off />
            </span>
          </div>
          <div className="flex flex-col gap-0.5">
            <Push className="h-[35px] w-[107px]">Cut scale</Push>
            <Push className="h-[35px] w-[107px]">Go scale</Push>
          </div>
        </div>
      </Group>
      <Group title="Device" className="mt-1.5 ml-2 h-[71px] w-[425px]">
        <div className="ml-2.5 flex items-center gap-1.5 pt-[5px]">
          <Push className="h-[35px] w-[138px]">Setting</Push>
          <Select label="Device" value="uy8t78---(USB:Auto)" className="h-[31px] w-[254px]" />
        </div>
      </Group>
    </section>
  );
}

/* ---------- bottom bars ---------- */

const swatches = [
  "bg-[#000000]", "bg-[#0000ff]", "bg-[#ff0000]", "bg-[#00ff00]", "bg-[#fa8072]",
  "bg-[#ffff00]", "bg-[#1e90ff]", "bg-[#8b3612]", "bg-[#808000]", "bg-[#008060]",
  "bg-[#ff4500]", "bg-[#400080]", "bg-[#ffd0dc]", "bg-[#b09cfa]", "bg-[#d4fc9a]",
  "bg-[#ff8c55]", "bg-[#db7093]", "bg-[#8670dc]", "bg-[#76e076]", "bg-[#b4a074]",
];

function ColorBar() {
  return (
    <div className="relative flex h-[49px] border-t border-b-2 border-t-white border-b-[#a8a8a8] bg-[#f0f0f0] pt-1.5">
      <Frame className="-top-2 left-0 h-[65px] w-[818px]" />
      <div className="flex w-[29px] flex-col items-center gap-3 pt-1.5 pr-2">
        <svg width="9" height="9" viewBox="0 0 10 9" fill="none" stroke="#000" strokeWidth="3">
          <path d="M1 0 L9 9 M9 0 L1 9" />
        </svg>
        <span className="h-3 w-2 border-r-2 border-b-2 border-l-2 border-[#b8b8b8]" />
      </div>
      <div className="flex h-[37px] w-[753px] gap-[3px]">
        {swatches.map((c, i) => (
          <button key={c} aria-label={`Layer colour ${i + 1}`} className={`flex-1 border border-t-2 border-[#a8a8a8] ${c}`} />
        ))}
      </div>
    </div>
  );
}

function StatusBar() {
  const cell = "border-t-2 border-r-2 border-l-2 border-[#b0b0b0] leading-[22px] whitespace-nowrap";
  return (
    <footer className="flex h-[32px] gap-[3px] bg-[#f0f0f0] pt-1.5 text-[17px] text-[#222]">
      <span className={`flex-1 pl-0.5 ${cell}`}>--- *Welcome to use the Laser system of cutting,Propose the display area 1024*768 or higher *---</span>
      <span className={`w-8 ${cell}`} />
      <span className={`w-[280px] pl-1.5 ${cell}`}>General mode,Total count:0</span>
      <span className={`w-[9px] ${cell}`} />
      <span className={`w-[383px] pl-0.5 ${cell}`}>RDC6442S,X:-94.036mm,Y:199.792mm</span>
    </footer>
  );
}

function Chrome({ badge }: { badge?: boolean }) {
  return (
    <Svg w={36} h={36}>
      <g stroke="none">
        <circle cx="18" cy="18" r="18" fill="#fbc116" />
        <path d="M18 18 L2.400 9 A18 18 0 0 1 33.600 9Z" fill="#e33b2e" />
        <path d="M2.400 9 A18 18 0 0 0 18 36 L25.800 22.500 L10.200 22.500Z" fill="#2da94f" />
        <circle cx="18" cy="18" r="8.500" fill="#fff" />
        <circle cx="18" cy="18" r="6.500" fill="#3f7ee8" />
        {badge && (
          <>
            <circle cx="27" cy="27" r="8.500" fill="#7a2020" />
            <circle cx="27" cy="25" r="3" fill="#f4dada" />
            <path d="M22 32 Q27 26 32 32Z" fill="#f4dada" />
          </>
        )}
      </g>
    </Svg>
  );
}

function TaskButton({ label, active, children }: Kids & { label: string; active?: boolean }) {
  return (
    <button aria-label={label} className={`relative flex h-full w-[73px] items-center justify-center ${active ? "bg-[#333336]" : ""}`}>
      {children}
      <span className={`absolute bottom-0 h-1 bg-[#76b9ed] ${active ? "inset-x-0" : "inset-x-1.5"}`} />
    </button>
  );
}

function Star({ x, y, r, c }: { x: number; y: number; r: number; c: string }) {
  const k = r * 0.25;
  return <path d={`M${x} ${y - r} Q${x + k} ${y - k} ${x + r} ${y} Q${x + k} ${y + k} ${x} ${y + r} Q${x - k} ${y + k} ${x - r} ${y} Q${x - k} ${y - k} ${x} ${y - r}Z`} fill={c} stroke={c} strokeLinejoin="round" />;
}

function Taskbar() {
  return (
    <div className="flex h-[60px] items-center bg-linear-to-r from-[#101119] from-0% via-[#07080d] via-50% to-[#0c0d12] text-[18px] text-white">
      <button aria-label="Start" className="flex h-full w-[71px] items-center justify-center">
        <Svg w={24} h={24}>
          <path d="M0 3 L11 1.500 V11.500 H0Z M13 1 L24 0 V11.500 H13Z M0 13 H11 V22.500 L0 21Z M13 13 H24 V24 L13 22.800Z" fill="#fff" stroke="none" />
        </Svg>
      </button>
      <div className="flex h-full w-[428px] items-center border border-[#5a5a5a] bg-[#3d3d3f] pr-3.5 pl-4">
        <Svg w={26} h={26}>
          <circle cx="16" cy="10" r="8.500" stroke="#ddd" />
          <path d="M10 16 L1 25" stroke="#ddd" />
        </Svg>
        <input aria-label="Buscar" placeholder="Buscar" className="mr-auto ml-[17px] w-[240px] bg-transparent text-[20px] text-white outline-none placeholder:text-[#c8c8c8]" />
        <Svg w={94} h={38}>
          <Star x={38} y={18} r={17} c="#f9b91c" />
          <Star x={71} y={24} r={8} c="#f9c94c" />
          <Star x={9} y={31} r={6} c="#28a0e8" />
          <circle cx="62" cy="4" r="3" fill="#e8622c" stroke="none" />
          <circle cx="89" cy="34" r="3" fill="#6cb83c" stroke="none" />
        </Svg>
      </div>
      <span className="w-0.5" />
      <TaskButton label="Chrome"><Chrome /></TaskButton>
      <TaskButton label="Explorer">
        <Svg w={32} h={28}>
          <path d="M0 2 Q0 0 2 0 H11 L14 4 H30 Q32 4 32 6 V26 H0Z" fill="#f8c94c" stroke="none" />
          <rect x="0" y="8" width="32" height="18" fill="#fddc7c" stroke="none" />
          <path d="M6 28 V14 H26 V28 H20 V20 H12 V28Z" fill="#2f8ee0" stroke="none" />
        </Svg>
      </TaskButton>
      <TaskButton label="Edge">
        <Svg w={36} h={36}>
          <defs>
            <linearGradient id="eg" x1="0" y1="0" x2="1" y2="0">
              <stop offset="0" stopColor="#1fa4e0" />
              <stop offset="1" stopColor="#54d86c" />
            </linearGradient>
          </defs>
          <g stroke="none">
            <circle cx="18" cy="18" r="18" fill="#1464b4" />
            <path d="M0 18 A18 18 0 0 1 36 17 Q36 25 27 25 Q21 25 22 21 Q24 14 15 12 Q5 11 0 18Z" fill="url(#eg)" />
            <path d="M17 14 Q11 18 14 25 Q19 32 31 28 L33 25 Q22 28 20 22 Q22 15 17 14Z" fill="#0d1a38" opacity="0.8" />
          </g>
        </Svg>
      </TaskButton>
      <TaskButton label="RDWorks" active>
        <Svg w={34} h={34}>
          <path d="M17 0 L19.500 8 L26 11 L20 13 L17 20 L14 13 L8 11 L14.500 8Z M0 18 L10 18 L13 22 V30 Q3 27 0 18Z M34 18 L24 18 L21 22 V30 Q31 27 34 18Z M17 20 L19 24 V30 L17 34 L15 30 V24Z" fill="#f00" stroke="none" />
        </Svg>
      </TaskButton>
      <TaskButton label="Chrome profile"><Chrome badge /></TaskButton>
      <div className="ml-auto flex h-full items-center pr-1">
        <div className="flex items-center gap-[13px] pr-3">
          <Svg w={20} h={12}><path d="M1 11 L10 2 L19 11" stroke="#eee" /></Svg>
          <Svg w={22} h={24} vb="-2 0 22 24"><path d="M3 7 H13 V17 H3Z M13 11 L17 9 V15 L13 13 M3 2 Q8 -1 13 2 M3 22 Q8 25 13 22" stroke="#eee" /></Svg>
          <Svg w={24} h={24}>
            <path d="M1 4 L22 1 V21 L1 20Z M7 11 Q11 6 16 9 M16 13 Q11 18 7 15 M16 5 V9 H12 M7 19 V15 H11" stroke="#eee" strokeWidth="1.800" />
            <circle cx="19" cy="19" r="5" fill="#2c78c8" stroke="none" />
          </Svg>
          <Svg w={24} h={24}>
            <path d="M10 0 Q15 3 20 3 V11 Q19 19 10 22 Q1 19 0 11 V3 Q5 3 10 0Z" fill="#fff" stroke="none" />
            <path d="M10 0 V22 M0 11 H20" stroke="#111" strokeWidth="1.500" />
            <circle cx="17" cy="17" r="6.500" fill="#10a04c" stroke="none" />
            <path d="M14 17 L16 19 L20 15" stroke="#fff" />
          </Svg>
          <Svg w={20} h={22}>
            <path d="M1 20 Q2 5 19 3 M6 21 Q7 10 19 8 M11 21 Q12 14 19 13" stroke="#aaa" />
            <circle cx="17" cy="19" r="2.500" fill="#fff" stroke="none" />
          </Svg>
          <Svg w={26} h={24}>
            <path d="M1 8 H5 L10 3 V21 L5 16 H1Z M14 8 Q17 12 14 16 M17 5 Q22 12 17 19 M21 2 Q27 12 21 22" stroke="#eee" strokeWidth="1.800" />
          </Svg>
        </div>
        <div className="text-center text-[17px] leading-[27px]">
          <div>13:46</div>
          <div>03-07-2025</div>
        </div>
        <span className="ml-2 h-full border-l-2 border-[#555]" />
      </div>
    </div>
  );
}

/* ---------- annotations ---------- */

const callouts: [string, string][] = [
  ["Barra de menú", "left-[801px] top-[38px] w-[211px]"],
  ["Barra del sistema", "left-[1226px] top-[72px] w-[246px]"],
  ["Barra de gráficos", "left-[1032px] top-[286px] w-[240px]"],
  ["Panel de capas", "left-[2189px] top-[378px] w-[216px]"],
  ["Barra de edición", "left-[188px] top-[526px] w-[229px]"],
  ["Área de trabajo", "left-[1259px] top-[890px] w-[222px]"],
  ["Panel de control", "left-[2183px] top-[1227px] w-[229px]"],
  ["Barra de colores para capas", "left-[708px] top-[1453px] w-[380px]"],
];

function Annotations() {
  return (
    <div className="pointer-events-none absolute inset-0 z-20">
      <svg className="absolute inset-0 size-full" stroke="#ff3131" strokeWidth="6" strokeLinecap="round">
        <path d="M804 60 L612 102 M1230 97 L1043 135 M924 262 L1046 296 M2298 423 L2442 578 M285 571 L142 648 M2314 1273 L2442 1366 M847 1499 L706 1525" />
      </svg>
      {callouts.map(([text, place]) => (
        <span key={text} className={`absolute flex h-[47px] items-center justify-center rounded-full bg-[#ff3131] font-['Inter',sans-serif] text-[25px] font-extrabold whitespace-nowrap text-white ${place}`}>
          {text}
        </span>
      ))}
    </div>
  );
}

export default function App() {
  return (
    <div className={`relative flex min-h-screen flex-col bg-white px-[89px] pt-[102px] pb-[102px] ${UI}`}>
      <nav className="flex h-8 w-[768px] items-center gap-[22px] border-4 border-[#ff3131] bg-white pt-0.5 pl-[7px] text-[17px] leading-5 whitespace-nowrap text-[#111]">
        {["File(F)", "Edit(E)", "Draw(D)", "Config(S)", "Handle(W)", "Tool(T)", "Model(M)", "View(V)", "Help(H)"].map((m) => (
          <button key={m}>{m}</button>
        ))}
      </nav>
      <SystemBar />
      <ToolBar />
      <GraphicsBar />
      <div className="flex flex-1">
        <EditBar />
        <Center />
        <div className="flex w-[491px] shrink-0 flex-col justify-between border-l-2 border-white bg-[#f0f0f0] text-[15px] text-[#111]">
          <LayerPanel />
          <ControlPanel />
        </div>
      </div>
      <ColorBar />
      <StatusBar />
      <Taskbar />
      <Annotations />
    </div>
  );
}
